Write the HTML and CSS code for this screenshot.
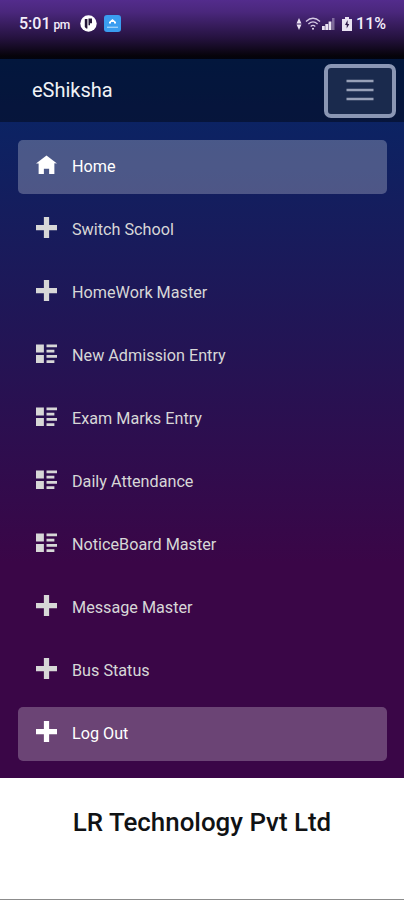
FILE: index.html
```
<!DOCTYPE html>
<html lang="en">
<head>
    <meta charset="UTF-8">
    <meta name="viewport" content="width=device-width, initial-scale=1.0">
    <link rel="stylesheet" href="styles.css">
    <title>eShiksha</title>
</head>
<body>
    <!-- shared icons -->
    <svg class="sprite">
        <symbol id="home" viewBox="0 -.6 8 8">
            <path d="M4 0l-4 3h1v4h2v-2h2v2h2v-4.03l1 .03-4-3z"/>
        </symbol>
        <symbol id="plus" viewBox="0 0 8 8">
            <path d="M3 0v3h-3v2h3v3h2v-3h3v-2h-3v-3h-2z"/>
        </symbol>
        <symbol id="list" viewBox="0 -.6 8 8">
            <path d="M0 0v3h3v-3h-3zm4 0v1h4v-1h-4zm0 2v1h3v-1h-3zm-4 2v3h3v-3h-3zm4 0v1h4v-1h-4zm0 2v1h3v-1h-3z"/>
        </symbol>
    </svg>

    <div class="status">
        <span class="time">5:01 <small>pm</small></span>
        <svg class="app-round" viewBox="0 0 17 17">
            <circle cx="8.5" cy="8.5" r="8.2" fill="#fff"/>
            <path d="M4.800 4h2.600v9.500H6.200L4.800 12zM8.500 3.500h3.500v4.800H10v2H8.500z" fill="#241638"/>
        </svg>
        <svg class="app-blue" viewBox="0 0 17 17">
            <rect width="17" height="17" rx="3" fill="#3a9df0"/>
            <path d="M5 8.500V7l3.500-3L12 7v1.500h-2V7H7v1.500z" fill="#fff"/>
            <path d="M3 12.300h11" stroke="#9bd0fa" stroke-width="1.4"/>
        </svg>
        <div class="status-right">
            <svg class="arrows" viewBox="0 0 6 12">
                <path d="M3 0l2.500 5.500h-5zM3 12l2.500-5.500h-5z"/>
            </svg>
            <svg class="wifi" viewBox="0 0 16 13">
                <path d="M1 4.500q7-6.500 14 0M3.400 7q4.600-4.200 9.200 0M5.700 9.400q2.300-2 4.600 0"/>
                <circle cx="8" cy="11.700" r="1"/>
            </svg>
            <svg class="signal" viewBox="0 0 13 12">
                <path d="M0 8h2.800v4H0zM3.300 6h2.800v6H3.300zM6.600 3.500h2.800V12H6.600z"/>
                <path d="M10 0h2.500v12H10z" opacity=".4"/>
            </svg>
            <svg class="battery" viewBox="0 0 10 14">
                <path d="M3 0h4v2h3v12H0V2h3z"/>
                <path d="M5.600 3L3 8h1.700v3.500L7.300 7H5.600z" fill="#2c1747"/>
            </svg>
            <span class="percent">11%</span>
        </div>
    </div>

    <div class="sidebar">
        <div class="top-row">
            <a class="brand" href="#">eShiksha</a>
            <button class="toggler" aria-label="Menu">
                <svg viewBox="0 0 28 22">
                    <path d="M.5 2h27M.5 11h27M.5 20h27"/>
                </svg>
            </button>
        </div>

        <nav class="menu">
            <a class="item active" href="#"><svg><use href="#home"/></svg>Home</a>
            <a class="item" href="#"><svg><use href="#plus"/></svg>Switch School</a>
            <a class="item" href="#"><svg><use href="#plus"/></svg>HomeWork Master</a>
            <a class="item" href="#"><svg><use href="#list"/></svg>New Admission Entry</a>
            <a class="item" href="#"><svg><use href="#list"/></svg>Exam Marks Entry</a>
            <a class="item" href="#"><svg><use href="#list"/></svg>Daily Attendance</a>
            <a class="item" href="#"><svg><use href="#list"/></svg>NoticeBoard Master</a>
            <a class="item" href="#"><svg><use href="#plus"/></svg>Message Master</a>
            <a class="item" href="#"><svg><use href="#plus"/></svg>Bus Status</a>
            <a class="item active" href="#"><svg><use href="#plus"/></svg>Log Out</a>
        </nav>
    </div>

    <main class="content">
        <h1>LR Technology Pvt Ltd</h1>
    </main>
</body>
</html>
```
FILE: styles.css
```
*{
    box-sizing: border-box;
}

body{
    margin: 0;
    height: 900px;
    display: flex;
    flex-direction: column;
    font-family: Roboto, "Liberation Sans", sans-serif;
    background-color: white;
}

a{
    text-decoration: none;
}

.sprite{
    display: none;
}

/* phone status bar */
.status{
    height: 59px;
    flex-shrink: 0;
    display: flex;
    align-items: center;
    padding: 0 18px 12px 19px;
    color: #f4eefa;
    background: linear-gradient(#532c8c 0, #4a277c 12px, #25123f 38px, #06030a 56px, #02040f 59px);
}

.time{
    font-size: 16px;
    font-weight: 500;
    width: 61px;
    white-space: nowrap;
}

.time small{
    font-size: 12px;
    letter-spacing: -0.4px;
    margin-left: -1px;
}

.app-round{
    width: 17px;
    height: 17px;
}

.app-blue{
    width: 17px;
    height: 17px;
    margin-left: 7px;
}

.status-right{
    display: flex;
    align-items: center;
    margin-left: auto;
    fill: #e9e2f2;
}

.arrows{
    width: 6px;
    height: 12px;
}

.wifi{
    width: 16px;
    height: 13px;
    margin-left: 3px;
}

.wifi path{
    fill: none;
    stroke: #d5cae4;
    stroke-width: 1.3;
}

.signal{
    width: 13px;
    height: 12px;
    margin-left: 1px;
}

.battery{
    width: 10px;
    height: 14px;
    margin: 0 4px 0 7px;
}

.percent{
    font-size: 16px;
    font-weight: 500;
}

.sidebar{
    height: 719px;
    flex-shrink: 0;
    background-image: linear-gradient(180deg, rgb(5, 39, 103) 0%, #3a0647 70%);
}

.top-row{
    height: 63px;
    display: flex;
    align-items: center;
    justify-content: space-between;
    padding: 0 8px 0 32px;
    background-color: rgba(0, 0, 0, 0.4);
}

.brand{
    color: #f0f2f6;
    font-size: 20px;
    padding-bottom: 1px;
}

.toggler{
    width: 72px;
    height: 54px;
    padding: 0;
    display: flex;
    align-items: center;
    justify-content: center;
    border: 4px solid #8a96b4;
    border-radius: 7px;
    background-color: #1a2a4d;
}

.toggler svg{
    width: 28px;
    height: 22px;
    margin-bottom: 1px;
    fill: none;
    stroke: #97a0b7;
    stroke-width: 2.4;
}

.menu{
    display: flex;
    flex-direction: column;
    gap: 9px;
    padding: 18px 17px 0 18px;
}

.item{
    height: 54px;
    display: flex;
    align-items: center;
    padding: 0 0 2px 18px;
    border-radius: 5px;
    color: #d7d7d7;
    font-size: 16.2px;
}

.item svg{
    width: 21px;
    height: 21px;
    margin: 0 15px 3px 0;
    fill: currentColor;
}

.item.active{
    color: white;
    background-color: rgba(255, 255, 255, 0.25);
}

.content{
    flex: 1;
    border-bottom: 1px solid #8c8c8c;
}

.content h1{
    margin: 28px 0 0;
    font-size: 25.9px;
    font-weight: 500;
    line-height: 32px;
    text-align: center;
    color: #101214;
}
```
